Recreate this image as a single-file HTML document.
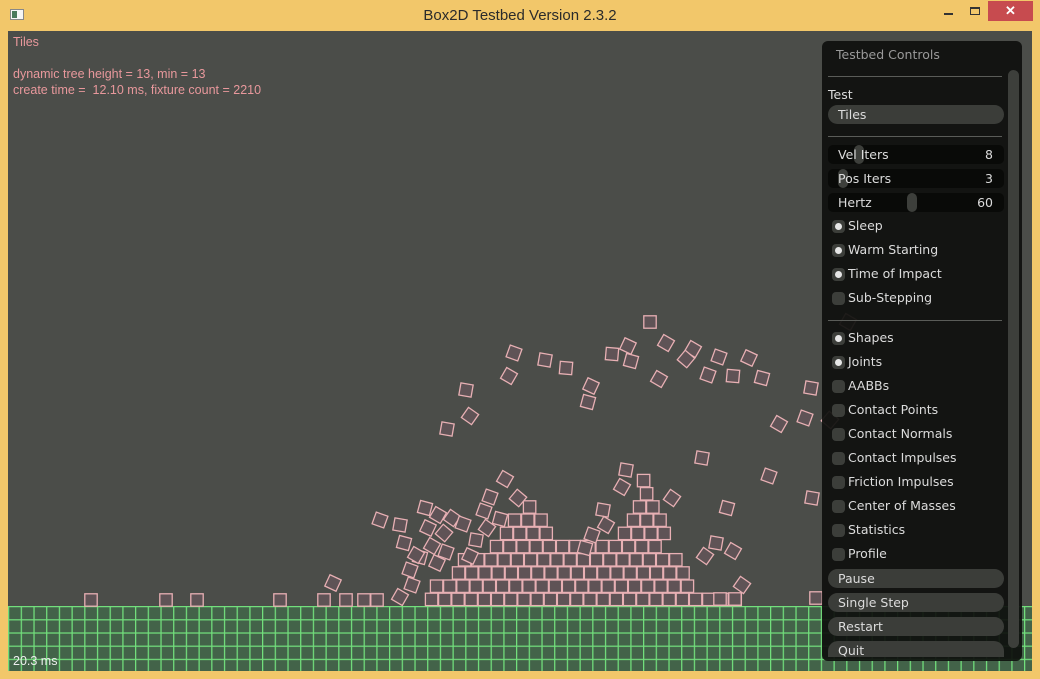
<!DOCTYPE html>
<html><head><meta charset="utf-8"><style>
*{margin:0;padding:0;box-sizing:border-box}
body{width:1040px;height:679px;background:#f2c76a;position:relative;overflow:hidden;font-family:"DejaVu Sans","Liberation Sans",sans-serif}
#title{position:absolute;left:0;top:0;width:1040px;height:31px;text-align:center;font:15px "Liberation Sans",sans-serif;color:#2b2b2b;line-height:31px;padding-top:0}
#canvas{position:absolute;left:8px;top:31px;width:1024px;height:640px;background:#4b4d49;overflow:hidden}
.t{position:absolute;color:#e8989c;font:12.5px "Liberation Sans",sans-serif;white-space:nowrap}
#panel{position:absolute;left:822px;top:41px;width:200px;height:620px;background:rgba(15,16,14,0.93);border-radius:6px;color:#dcdcdc;font-size:12.5px}
.sep{position:absolute;left:6px;width:174px;height:1px;background:#5a5c58}
.lab{position:absolute;left:26px;white-space:nowrap}
.cb{position:absolute;left:10px;width:13px;height:13px;border-radius:4px;background:#3c3e3a}
.cb.on::after{content:"";position:absolute;left:3px;top:3px;width:7px;height:7px;border-radius:50%;background:#e6e6e6}
.btn{position:absolute;left:6px;width:176px;height:19px;border-radius:10px;background:#3b3d39;padding-left:10px;line-height:19px}
.sl{position:absolute;left:6px;width:176px;height:19px;border-radius:5px;background:#090a08;line-height:19px}
.sl b{position:absolute;top:0;width:10px;height:19px;border-radius:5px;background:#3d3f3b;font-weight:normal}
.sl i{position:absolute;left:10px;top:0;font-style:normal}
.sl span{position:absolute;right:11px;top:0}
</style></head><body>
<div style="position:absolute;left:10px;top:9px;width:14px;height:11px;background:#f6f6f6;border:1px solid #888"><div style="position:absolute;left:1px;top:1px;width:5px;height:7px;background:#4a7a5a"></div></div>
<div id="title">Box2D Testbed Version 2.3.2</div>
<div style="position:absolute;left:944px;top:13px;width:9px;height:2px;background:#333"></div>
<div style="position:absolute;left:970px;top:7px;width:10px;height:8px;border:1px solid #333;border-top-width:2px"></div>
<div style="position:absolute;left:988px;top:1px;width:45px;height:20px;background:#c74b4f;color:#fff;text-align:center;font:bold 13px 'Liberation Sans',sans-serif;line-height:20px">✕</div>
<div id="canvas">
<svg id="sv" width="1024" height="640" style="position:absolute;left:0;top:0">
<defs><pattern id="g" x="0" y="575" width="12.7" height="13.2" patternUnits="userSpaceOnUse"><rect width="12.7" height="13.2" fill="#436349"/><path d="M0.6 0V13.2M0 0.6H12.7" stroke="#72e07c" stroke-width="1.3"/></pattern></defs>
<rect x="0" y="575" width="1024" height="65" fill="url(#g)"/>
<g id="bx"></g>
</svg>
<div class="t" style="left:5px;top:4px">Tiles</div>
<div class="t" style="left:5px;top:36px">dynamic tree height = 13, min = 13</div>
<div class="t" style="left:5px;top:52px">create time =&nbsp; 12.10 ms, fixture count = 2210</div>
<div class="t" style="left:5px;top:623px;color:#eee">20.3 ms</div>
</div>
<div id="panel">
<div style="position:absolute;left:14px;top:6px;color:#9a9a9a">Testbed Controls</div>
<div class="sep" style="top:35px"></div>
<div style="position:absolute;right:3px;top:29px;width:11px;height:578px;border-radius:6px;background:#3d3f3b"></div>
<div style="position:absolute;left:6px;top:46px">Test</div>
<div class="btn" style="top:64px">Tiles</div>
<div class="sep" style="top:95px"></div>
<div class="sl" style="top:104px"><b style="left:26px"></b><i>Vel Iters</i><span>8</span></div>
<div class="sl" style="top:128px"><b style="left:10px"></b><i>Pos Iters</i><span>3</span></div>
<div class="sl" style="top:152px"><b style="left:79px"></b><i>Hertz</i><span>60</span></div>
<div id="cbs"></div>
<div class="sep" style="top:279px"></div>
<div class="btn" style="top:528px">Pause</div>
<div class="btn" style="top:552px">Single Step</div>
<div class="btn" style="top:576px">Restart</div>
<div class="btn" style="top:600px;height:16px;border-radius:10px 10px 0 0">Quit</div>
</div>
<script>
var cb=[["Sleep",178,1],["Warm Starting",202,1],["Time of Impact",226,1],["Sub-Stepping",250,0],["Shapes",290,1],["Joints",314,1],["AABBs",338,0],["Contact Points",362,0],["Contact Normals",386,0],["Contact Impulses",410,0],["Friction Impulses",434,0],["Center of Masses",458,0],["Statistics",482,0],["Profile",506,0]];
var h="";cb.forEach(function(c){h+='<div class="cb'+(c[2]?' on':'')+'" style="top:'+(c[1]+1)+'px"></div><div class="lab" style="top:'+(c[1]-1)+'px">'+c[0]+'</div>';});
document.getElementById("cbs").innerHTML=h;
var s="";function B(x,y,a){x-=8;y-=31;s+='<rect x="'+(x-6.2)+'" y="'+(y-6.2)+'" width="12.4" height="12.4" fill="#5f5356" stroke="#e8b0b4" stroke-width="1.3"'+(a?' transform="rotate('+a+' '+x+' '+y+')"':'')+'/>';}
var rows=[[425,742],[430,703],[452,695],[458,688],[490,673],[500,553,618,673],[508,548,627,667],[523,537,633,660],[640,653],[637,650]];
rows.forEach(function(r,i){var y=606-13.2*i-6.6;for(var k=0;k<r.length;k+=2){for(var x=r[k]+6.6;x<=r[k+1]-5;x+=13.2)B(x,y,0);}});
[[91,600],[166,600],[197,600],[280,600],[324,600],[346,600],[364,600],[377,600],[720,599],[735,599],[816,598]].forEach(function(p){B(p[0],p[1],0)});
var r=[[400,597,30],[333,583,25],[380,520,20],[400,525,10],[404,543,15],[410,570,20],[650,322,0],[514,353,20],[545,360,10],[566,368,5],[612,354,5],[628,346,25],[631,361,15],[666,343,30],[693,349,30],[686,359,40],[719,357,20],[749,358,25],[659,379,30],[708,375,20],[733,376,5],[762,378,15],[509,376,30],[466,390,10],[591,386,25],[588,402,15],[470,416,35],[447,429,10],[811,388,10],[805,418,20],[779,424,30],[830,420,40],[848,322,30],[702,458,10],[769,476,20],[727,508,15],[672,498,35],[716,543,10],[705,556,35],[733,551,30],[742,585,35],[812,498,10],[626,470,10],[622,487,30],[505,479,30],[490,497,20],[518,498,40],[425,508,15],[438,515,30],[452,518,35],[463,524,20],[428,528,25],[444,533,40],[432,546,30],[446,552,20],[420,557,15],[437,563,25],[484,511,20],[487,528,35],[476,540,10],[470,556,25],[500,519,15],[603,510,10],[606,525,30],[592,535,20],[585,548,15],[412,585,20],[416,555,30]];
r.forEach(function(p){B(p[0],p[1],p[2])});
document.getElementById("bx").innerHTML=s;
</script>
</body></html>
